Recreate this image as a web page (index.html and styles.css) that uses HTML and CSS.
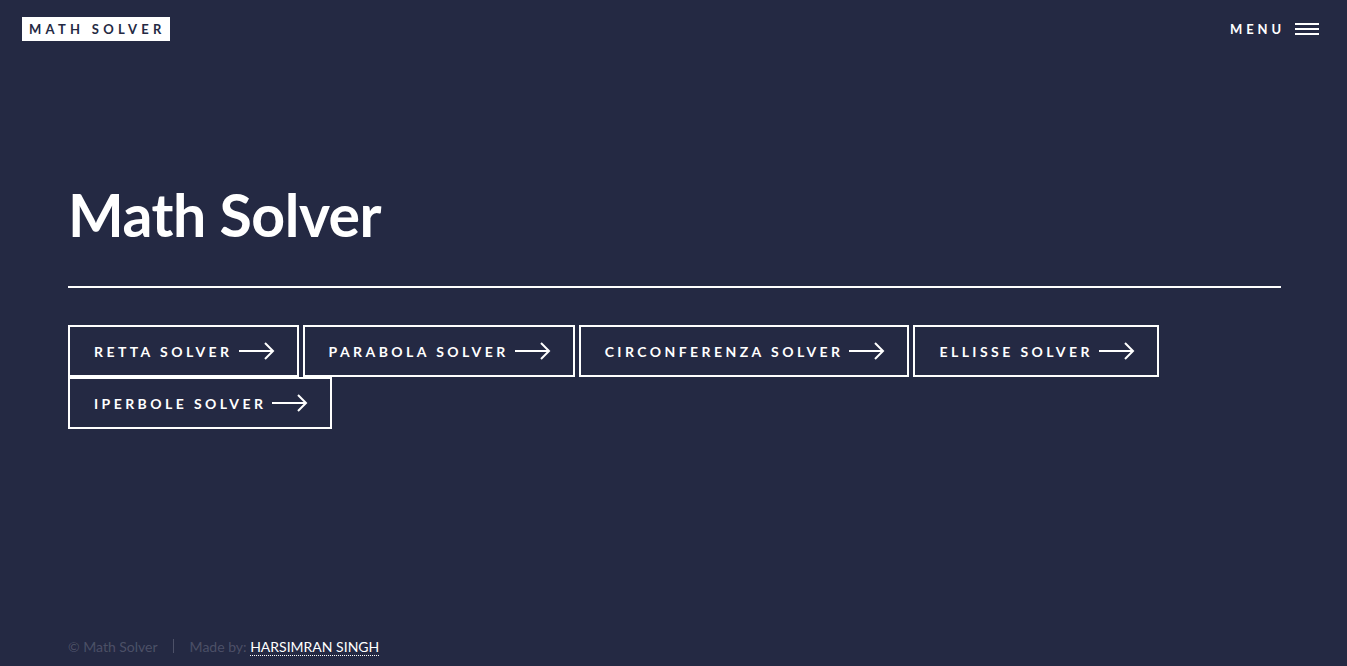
FILE: index.html
```html
<!DOCTYPE html>
<html lang="it">
<head>
<meta charset="utf-8">
<title>Math Solver</title>
<link rel="stylesheet" href="styles.css">
</head>
<body>
<header class="header">
  <a class="logo" href="#"><span class="logo-box">MATH SOLVER</span></a>
  <a class="menu" href="#">MENU
    <svg class="burger" width="24" height="12" viewBox="0 0 24 12"><rect x="0" y="0" width="24" height="2" fill="#fff"/><rect x="0" y="5" width="24" height="2" fill="#fff"/><rect x="0" y="10" width="24" height="2" fill="#fff"/></svg>
  </a>
</header>
<main class="main">
  <h1 class="title">Math Solver</h1>
  <hr class="rule">
  <div class="buttons">
    <a class="btn" href="#"><span>RETTA SOLVER</span><svg class="arrow" width="36" height="18" viewBox="0 0 36 18"><path d="M0 9H34M26 1L34 9L26 17" fill="none" stroke="#fff" stroke-width="2"/></svg></a>
    <a class="btn" href="#"><span>PARABOLA SOLVER</span><svg class="arrow" width="36" height="18" viewBox="0 0 36 18"><path d="M0 9H34M26 1L34 9L26 17" fill="none" stroke="#fff" stroke-width="2"/></svg></a>
    <a class="btn" href="#"><span>CIRCONFERENZA SOLVER</span><svg class="arrow" width="36" height="18" viewBox="0 0 36 18"><path d="M0 9H34M26 1L34 9L26 17" fill="none" stroke="#fff" stroke-width="2"/></svg></a>
    <a class="btn" href="#"><span>ELLISSE SOLVER</span><svg class="arrow" width="36" height="18" viewBox="0 0 36 18"><path d="M0 9H34M26 1L34 9L26 17" fill="none" stroke="#fff" stroke-width="2"/></svg></a>
    <a class="btn" href="#"><span>IPERBOLE SOLVER</span><svg class="arrow" width="36" height="18" viewBox="0 0 36 18"><path d="M0 9H34M26 1L34 9L26 17" fill="none" stroke="#fff" stroke-width="2"/></svg></a>
  </div>
</main>
<footer class="footer">
  <span class="copy">© Math Solver</span>
  <span class="sep"></span>
  <span class="made">Made by: <a class="author" href="#">HARSIMRAN SINGH</a></span>
</footer>
</body>
</html>
```
FILE: styles.css
```css
html, body {
  margin: 0;
  padding: 0;
  height: 100%;
}
body {
  background: #242943;
  color: #fff;
  font-family: "Lato", "Open Sans", sans-serif;
  display: flex;
  flex-direction: column;
  min-height: 666px;
}
a { color: inherit; text-decoration: none; }

.header {
  height: 58px;
  display: flex;
  align-items: center;
  justify-content: space-between;
  padding: 0 28px 0 22px;
}
.logo-box {
  display: inline-block;
  background: #fff;
  color: #242943;
  font-size: 13px;
  font-weight: 700;
  letter-spacing: 0.33em;
  line-height: 24px;
  height: 24px;
  padding: 0 4px 0 7px;
}
.menu {
  display: flex;
  align-items: center;
  font-size: 13px;
  font-weight: 700;
  letter-spacing: 0.3em;
  gap: 10px;
}
.burger { display: block; }

.main {
  flex: 1;
  padding: 0 66px 0 68px;
}
.title {
  margin: 127px 0 0;
  font-size: 59px;
  font-weight: 700;
  line-height: 1;
  letter-spacing: -0.5px;
}
.rule {
  margin: 42px 0 0;
  border: 0;
  height: 2px;
  background: #fff;
}
.buttons {
  margin-top: 37px;
  display: flex;
  flex-wrap: wrap;
  column-gap: 4px;
  max-width: 1100px;
}
.btn {
  display: flex;
  align-items: center;
  height: 52px;
  box-sizing: border-box;
  border: 2px solid #fff;
  padding: 0 22px 0 24px;
  font-size: 14px;
  font-weight: 700;
  letter-spacing: 0.245em;
}
.arrow {
  display: block;
  margin-left: 6px;
}

.footer {
  height: 40px;
  padding: 0 68px 0;
  display: flex;
  align-items: center;
  font-size: 14px;
  color: rgba(244, 244, 255, 0.2);
}
.sep {
  width: 1px;
  height: 14px;
  background: rgba(244, 244, 255, 0.2);
  margin: 0 15px;
}
.made { padding-left: 1px; }
.author {
  color: #fff;
  border-bottom: 1px dotted #fff;
}
```
